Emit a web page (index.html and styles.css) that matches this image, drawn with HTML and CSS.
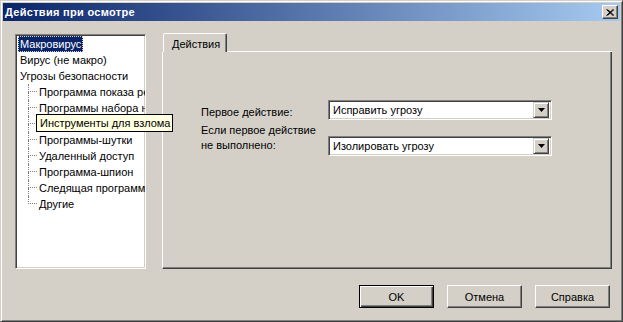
FILE: index.html
```html
<html>
<head>
<meta charset="utf-8">
<title>Действия при осмотре</title>
<link rel="stylesheet" href="styles.css">
</head>
<body>
<div class="window">
  <div class="titlebar">
    <span class="title">Действия при осмотре</span>
    <span class="closebtn">
      <svg width="8" height="7" viewBox="0 0 8 7">
        <path d="M0.5 0.5 L7 6.5 M1.5 0.5 L8 6.5 M7 0.5 L0.5 6.5 M8 0.5 L1.5 6.5" stroke="#000" stroke-width="1" fill="none"/>
      </svg>
    </span>
  </div>

  <div class="main">
    <div class="tree">
      <div class="item"><span class="label selected">Макровирус</span></div>
      <div class="item"><span class="label">Вирус (не макро)</span></div>
      <div class="item"><span class="label">Угрозы безопасности</span></div>
      <div class="child"><span class="branch"><i class="up"></i><i class="down"></i></span><span class="label">Программа показа рекламы</span></div>
      <div class="child"><span class="branch"><i class="up"></i><i class="down"></i></span><span class="label">Программы набора номера</span></div>
      <div class="child"><span class="branch"><i class="up"></i><i class="down"></i></span><span class="label">Инструменты для взлома</span></div>
      <div class="child"><span class="branch"><i class="up"></i><i class="down"></i></span><span class="label">Программы-шутки</span></div>
      <div class="child"><span class="branch"><i class="up"></i><i class="down"></i></span><span class="label">Удаленный доступ</span></div>
      <div class="child"><span class="branch"><i class="up"></i><i class="down"></i></span><span class="label">Программа-шпион</span></div>
      <div class="child"><span class="branch"><i class="up"></i><i class="down"></i></span><span class="label">Следящая программа</span></div>
      <div class="child last"><span class="branch"><i class="up"></i><i class="down"></i></span><span class="label">Другие</span></div>
    </div>

    <div class="tabs">
      <div class="tabrow">
        <div class="tab">Действия</div>
        <div class="tabline"></div>
      </div>
      <div class="panel">
        <div class="form">
          <div class="flabel one">Первое действие:</div>
          <div class="select">
            <span class="value">Исправить угрозу</span>
            <span class="arrow"><svg width="7" height="4" viewBox="0 0 7 4"><path d="M0 0 H7 L3.5 4 Z" fill="#000"/></svg></span>
          </div>
          <div class="flabel">Если первое действие<br>не выполнено:</div>
          <div class="select two">
            <span class="value">Изолировать угрозу</span>
            <span class="arrow"><svg width="7" height="4" viewBox="0 0 7 4"><path d="M0 0 H7 L3.5 4 Z" fill="#000"/></svg></span>
          </div>
        </div>
      </div>
    </div>
  </div>

  <div class="buttons">
    <div class="button default"><span>OK</span></div>
    <div class="button"><span>Отмена</span></div>
    <div class="button"><span>Справка</span></div>
  </div>

  <div class="tooltip">Инструменты для взлома</div>
</div>
</body>
</html>
```

FILE: styles.css
```css
body {
    margin: 0;
    background: #d4d0c8;
    font-family: "Liberation Sans", Arial, sans-serif;
    font-size: 11px;
    color: #000;
}
.window {
    position: relative;
    width: 623px;
    height: 322px;
    box-sizing: border-box;
    background: #d4d0c8;
    border: 1px solid;
    border-color: #d4d0c8 #404040 #404040 #d4d0c8;
    box-shadow: inset 1px 1px #fff, inset -1px -1px #808080;
    padding: 2px;
}
.titlebar {
    height: 18px;
    display: flex;
    align-items: center;
    justify-content: space-between;
    background: linear-gradient(to right, #0a246a, #a6caf0);
    padding: 0 2px 0 2px;
}
.title {
    color: #fff;
    font-weight: bold;
    font-size: 11px;
    letter-spacing: 0.3px;
}
.closebtn {
    width: 14px;
    height: 12px;
    display: flex;
    align-items: center;
    justify-content: center;
    background: #d4d0c8;
    border: 1px solid;
    border-color: #fff #404040 #404040 #fff;
    box-shadow: inset -1px -1px #808080;
}
.main {
    display: flex;
    padding: 12px 0 0 12px;
    height: 236px;
}
.tree {
    width: 131px;
    height: 235px;
    margin-top: 1px;
    box-sizing: border-box;
    background: #fff;
    border: 1px solid;
    border-color: #808080 #fff #fff #808080;
    box-shadow: inset 1px 1px #404040, inset -1px -1px #d4d0c8;
    padding: 1px 2px 0 2px;
    overflow: hidden;
    white-space: nowrap;
}
.item, .child {
    height: 16px;
    display: flex;
    align-items: center;
}
.label {
    padding: 0 1px;
    line-height: 14px;
    border: 1px dotted transparent;
}
.label.selected {
    background: #0a246a;
    color: #fff;
    border-color: #d4d0c8;
}
.branch {
    display: flex;
    flex-direction: column;
    width: 9px;
    height: 16px;
    margin-left: 10px;
    margin-right: 0;
    flex: none;
}
.branch i {
    display: block;
    height: 8px;
    box-sizing: border-box;
}
.branch .up {
    border-left: 1px dotted #808080;
    border-bottom: 1px dotted #808080;
}
.branch .down {
    border-left: 1px dotted #808080;
}
.child.last .branch .down {
    border-left: none;
}
.tabs {
    margin-left: 16px;
    width: 450px;
    display: flex;
    flex-direction: column;
}
.tabrow {
    display: flex;
    height: 19px;
    align-items: flex-end;
}
.tab {
    width: 64px;
    height: 19px;
    box-sizing: border-box;
    margin-left: 1px;
    padding: 4px 0 0 8px;
    border: 1px solid;
    border-bottom: none;
    border-color: #fff #404040 #fff #fff;
    border-radius: 2px 2px 0 0;
    box-shadow: inset -1px 0 #808080;
}
.tabline {
    flex: 1;
    border-bottom: 1px solid #fff;
}
.panel {
    flex: 1;
    box-sizing: border-box;
    border: 1px solid;
    border-top: none;
    border-color: #fff #404040 #404040 #fff;
    box-shadow: inset -1px -1px #808080;
    padding: 48px 0 0 38px;
}
.form {
    display: grid;
    grid-template-columns: 127px 224px;
    row-gap: 3px;
    align-items: start;
}
.flabel {
    line-height: 15px;
}
.flabel.one {
    margin-top: 5px;
}
.select {
    height: 20px;
    box-sizing: border-box;
    background: #fff;
    border: 1px solid;
    border-color: #808080 #fff #fff #808080;
    box-shadow: inset 1px 1px #404040, inset -1px -1px #d4d0c8;
    display: flex;
    align-items: center;
    justify-content: space-between;
    padding: 2px;
}
.select.two {
    margin-top: 13px;
}
.value {
    padding-left: 2px;
}
.arrow {
    width: 16px;
    height: 16px;
    box-sizing: border-box;
    background: #d4d0c8;
    border: 1px solid;
    border-color: #d4d0c8 #404040 #404040 #d4d0c8;
    box-shadow: inset 1px 1px #fff, inset -1px -1px #808080;
    display: flex;
    align-items: center;
    justify-content: center;
}
.buttons {
    display: flex;
    justify-content: flex-end;
    gap: 13px;
    padding: 16px 10px 0 0;
}
.button {
    width: 75px;
    height: 23px;
    box-sizing: border-box;
    border: 1px solid;
    border-color: #fff #404040 #404040 #fff;
    box-shadow: inset -1px -1px #808080;
    display: flex;
    align-items: center;
    justify-content: center;
}
.button.default {
    border: 1px solid #000;
    box-shadow: inset 1px 1px #fff, inset -1px -1px #404040, inset -2px -2px #808080;
}
.tooltip {
    position: absolute;
    left: 35px;
    top: 113px;
    height: 18px;
    box-sizing: border-box;
    padding: 0 2px 0 3px;
    line-height: 16px;
    background: #ffffe1;
    border: 1px solid #000;
    white-space: nowrap;
}
```
